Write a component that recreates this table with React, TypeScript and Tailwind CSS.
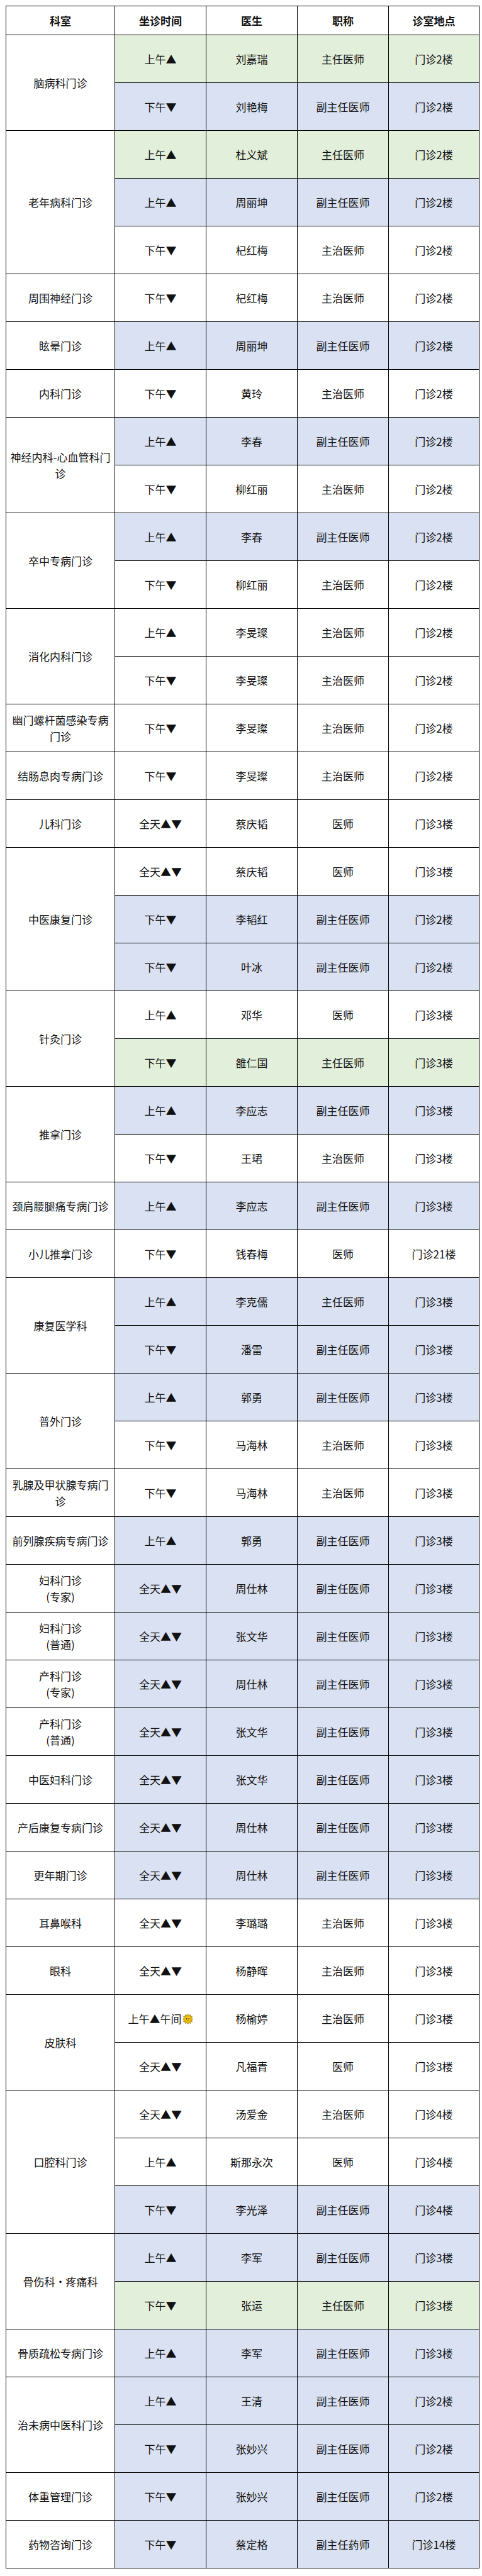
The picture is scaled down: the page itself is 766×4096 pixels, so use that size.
import React from "react";

type Bg = "g" | "b" | "w";
type Row = { t: React.ReactNode; d: string; r: string; l: string; bg: Bg };
type Group = { dept: React.ReactNode; rows: Row[] };

const AM = "上午▲";
const PM = "下午▼";
const ALL = "全天▲▼";

const Sun = () => (
  <svg width="17" height="17" viewBox="0 0 20 20" className="inline-block align-[-2px] ml-[1px]">
    <polygon
      points="10,0.5 11.8,3.2 14.8,1.8 15.1,5 18.3,5.3 16.9,8.2 19.5,10 16.9,11.8 18.3,14.7 15.1,15 14.8,18.2 11.8,16.8 10,19.5 8.2,16.8 5.2,18.2 4.9,15 1.7,14.7 3.1,11.8 0.5,10 3.1,8.2 1.7,5.3 4.9,5 5.2,1.8 8.2,3.2"
      fill="#f5c400"
      stroke="#8a6a00"
      strokeWidth="0.8"
    />
    <circle cx="10" cy="10" r="5.4" fill="#ffd21f" stroke="#a07a00" strokeWidth="0.6" />
    <circle cx="8" cy="8.9" r="0.9" fill="#3a2a00" />
    <circle cx="12" cy="8.9" r="0.9" fill="#3a2a00" />
    <path d="M7.3 11.2 Q10 14 12.7 11.2" fill="none" stroke="#3a2a00" strokeWidth="0.9" strokeLinecap="round" />
  </svg>
);

const groups: Group[] = [
  {
    dept: "脑病科门诊",
    rows: [
      { t: AM, d: "刘嘉瑞", r: "主任医师", l: "门诊2楼", bg: "g" },
      { t: PM, d: "刘艳梅", r: "副主任医师", l: "门诊2楼", bg: "b" },
    ],
  },
  {
    dept: "老年病科门诊",
    rows: [
      { t: AM, d: "杜义斌", r: "主任医师", l: "门诊2楼", bg: "g" },
      { t: AM, d: "周丽坤", r: "副主任医师", l: "门诊2楼", bg: "b" },
      { t: PM, d: "杞红梅", r: "主治医师", l: "门诊2楼", bg: "w" },
    ],
  },
  { dept: "周围神经门诊", rows: [{ t: PM, d: "杞红梅", r: "主治医师", l: "门诊2楼", bg: "w" }] },
  { dept: "眩晕门诊", rows: [{ t: AM, d: "周丽坤", r: "副主任医师", l: "门诊2楼", bg: "b" }] },
  { dept: "内科门诊", rows: [{ t: PM, d: "黄玲", r: "主治医师", l: "门诊2楼", bg: "w" }] },
  {
    dept: "神经内科-心血管科门诊",
    rows: [
      { t: AM, d: "李春", r: "副主任医师", l: "门诊2楼", bg: "b" },
      { t: PM, d: "柳红丽", r: "主治医师", l: "门诊2楼", bg: "w" },
    ],
  },
  {
    dept: "卒中专病门诊",
    rows: [
      { t: AM, d: "李春", r: "副主任医师", l: "门诊2楼", bg: "b" },
      { t: PM, d: "柳红丽", r: "主治医师", l: "门诊2楼", bg: "w" },
    ],
  },
  {
    dept: "消化内科门诊",
    rows: [
      { t: AM, d: "李旻璨", r: "主治医师", l: "门诊2楼", bg: "w" },
      { t: PM, d: "李旻璨", r: "主治医师", l: "门诊2楼", bg: "w" },
    ],
  },
  { dept: "幽门螺杆菌感染专病门诊", rows: [{ t: PM, d: "李旻璨", r: "主治医师", l: "门诊2楼", bg: "w" }] },
  { dept: "结肠息肉专病门诊", rows: [{ t: PM, d: "李旻璨", r: "主治医师", l: "门诊2楼", bg: "w" }] },
  { dept: "儿科门诊", rows: [{ t: ALL, d: "蔡庆韬", r: "医师", l: "门诊3楼", bg: "w" }] },
  {
    dept: "中医康复门诊",
    rows: [
      { t: ALL, d: "蔡庆韬", r: "医师", l: "门诊3楼", bg: "w" },
      { t: PM, d: "李韬红", r: "副主任医师", l: "门诊2楼", bg: "b" },
      { t: PM, d: "叶冰", r: "副主任医师", l: "门诊2楼", bg: "b" },
    ],
  },
  {
    dept: "针灸门诊",
    rows: [
      { t: AM, d: "邓华", r: "医师", l: "门诊3楼", bg: "w" },
      { t: PM, d: "雒仁国", r: "主任医师", l: "门诊3楼", bg: "g" },
    ],
  },
  {
    dept: "推拿门诊",
    rows: [
      { t: AM, d: "李应志", r: "副主任医师", l: "门诊3楼", bg: "b" },
      { t: PM, d: "王珺", r: "主治医师", l: "门诊3楼", bg: "w" },
    ],
  },
  { dept: "颈肩腰腿痛专病门诊", rows: [{ t: AM, d: "李应志", r: "副主任医师", l: "门诊3楼", bg: "b" }] },
  { dept: "小儿推拿门诊", rows: [{ t: PM, d: "钱春梅", r: "医师", l: "门诊21楼", bg: "w" }] },
  {
    dept: "康复医学科",
    rows: [
      { t: AM, d: "李克儒", r: "主任医师", l: "门诊3楼", bg: "b" },
      { t: PM, d: "潘雷", r: "副主任医师", l: "门诊3楼", bg: "b" },
    ],
  },
  {
    dept: "普外门诊",
    rows: [
      { t: AM, d: "郭勇", r: "副主任医师", l: "门诊3楼", bg: "b" },
      { t: PM, d: "马海林", r: "主治医师", l: "门诊3楼", bg: "w" },
    ],
  },
  { dept: "乳腺及甲状腺专病门诊", rows: [{ t: PM, d: "马海林", r: "主治医师", l: "门诊3楼", bg: "w" }] },
  { dept: "前列腺疾病专病门诊", rows: [{ t: AM, d: "郭勇", r: "副主任医师", l: "门诊3楼", bg: "b" }] },
  {
    dept: (
      <>
        妇科门诊
        <br />
        (专家)
      </>
    ),
    rows: [{ t: ALL, d: "周仕林", r: "副主任医师", l: "门诊3楼", bg: "b" }],
  },
  {
    dept: (
      <>
        妇科门诊
        <br />
        (普通)
      </>
    ),
    rows: [{ t: ALL, d: "张文华", r: "副主任医师", l: "门诊3楼", bg: "b" }],
  },
  {
    dept: (
      <>
        产科门诊
        <br />
        (专家)
      </>
    ),
    rows: [{ t: ALL, d: "周仕林", r: "副主任医师", l: "门诊3楼", bg: "b" }],
  },
  {
    dept: (
      <>
        产科门诊
        <br />
        (普通)
      </>
    ),
    rows: [{ t: ALL, d: "张文华", r: "副主任医师", l: "门诊3楼", bg: "b" }],
  },
  { dept: "中医妇科门诊", rows: [{ t: ALL, d: "张文华", r: "副主任医师", l: "门诊3楼", bg: "b" }] },
  { dept: "产后康复专病门诊", rows: [{ t: ALL, d: "周仕林", r: "副主任医师", l: "门诊3楼", bg: "b" }] },
  { dept: "更年期门诊", rows: [{ t: ALL, d: "周仕林", r: "副主任医师", l: "门诊3楼", bg: "b" }] },
  { dept: "耳鼻喉科", rows: [{ t: ALL, d: "李璐璐", r: "主治医师", l: "门诊3楼", bg: "w" }] },
  { dept: "眼科", rows: [{ t: ALL, d: "杨静晖", r: "主治医师", l: "门诊3楼", bg: "w" }] },
  {
    dept: "皮肤科",
    rows: [
      {
        t: (
          <>
            上午▲午间
            <Sun />
          </>
        ),
        d: "杨榆婷",
        r: "主治医师",
        l: "门诊3楼",
        bg: "w",
      },
      { t: ALL, d: "凡福青", r: "医师", l: "门诊3楼", bg: "w" },
    ],
  },
  {
    dept: "口腔科门诊",
    rows: [
      { t: ALL, d: "汤爱金", r: "主治医师", l: "门诊4楼", bg: "w" },
      { t: AM, d: "斯那永次", r: "医师", l: "门诊4楼", bg: "w" },
      { t: PM, d: "李光泽", r: "副主任医师", l: "门诊4楼", bg: "b" },
    ],
  },
  {
    dept: "骨伤科·疼痛科",
    rows: [
      { t: AM, d: "李军", r: "副主任医师", l: "门诊3楼", bg: "b" },
      { t: PM, d: "张运", r: "主任医师", l: "门诊3楼", bg: "g" },
    ],
  },
  { dept: "骨质疏松专病门诊", rows: [{ t: AM, d: "李军", r: "副主任医师", l: "门诊3楼", bg: "b" }] },
  {
    dept: "治未病中医科门诊",
    rows: [
      { t: AM, d: "王清", r: "副主任医师", l: "门诊2楼", bg: "b" },
      { t: PM, d: "张妙兴", r: "副主任医师", l: "门诊2楼", bg: "b" },
    ],
  },
  { dept: "体重管理门诊", rows: [{ t: PM, d: "张妙兴", r: "副主任医师", l: "门诊2楼", bg: "b" }] },
  { dept: "药物咨询门诊", rows: [{ t: PM, d: "蔡定格", r: "副主任药师", l: "门诊14楼", bg: "b" }] },
];

const bgClass: Record<Bg, string> = {
  g: "bg-[#e2efda]",
  b: "bg-[#d9e1f2]",
  w: "bg-white",
};

const cell = "border border-black text-center align-middle px-1";

export default function App() {
  return (
    <div className="bg-white w-[766px] h-[4096px] pt-[9px] pl-[9px] font-['Noto_Sans_CJK_SC',sans-serif] text-[17px] leading-[26px] text-[#111]">
      <table className="table-fixed border-collapse w-[752px]">
        <colgroup>
          <col className="w-[173px]" />
          <col className="w-[145px]" />
          <col className="w-[145px]" />
          <col className="w-[145px]" />
          <col className="w-[144px]" />
        </colgroup>
        <thead>
          <tr className="h-[46px]">
            {["科室", "坐诊时间", "医生", "职称", "诊室地点"].map((h) => (
              <th key={h} className={`${cell} font-bold bg-white`}>
                {h}
              </th>
            ))}
          </tr>
        </thead>
        <tbody>
          {groups.map((g, gi) =>
            g.rows.map((r, ri) => (
              <tr key={`${gi}-${ri}`} className="h-[76px]">
                {ri === 0 && (
                  <td rowSpan={g.rows.length} className={`${cell} bg-white`}>
                    {g.dept}
                  </td>
                )}
                <td className={`${cell} ${bgClass[r.bg]} whitespace-nowrap`}>{r.t}</td>
                <td className={`${cell} ${bgClass[r.bg]}`}>{r.d}</td>
                <td className={`${cell} ${bgClass[r.bg]}`}>{r.r}</td>
                <td className={`${cell} ${bgClass[r.bg]}`}>{r.l}</td>
              </tr>
            ))
          )}
        </tbody>
      </table>
    </div>
  );
}
